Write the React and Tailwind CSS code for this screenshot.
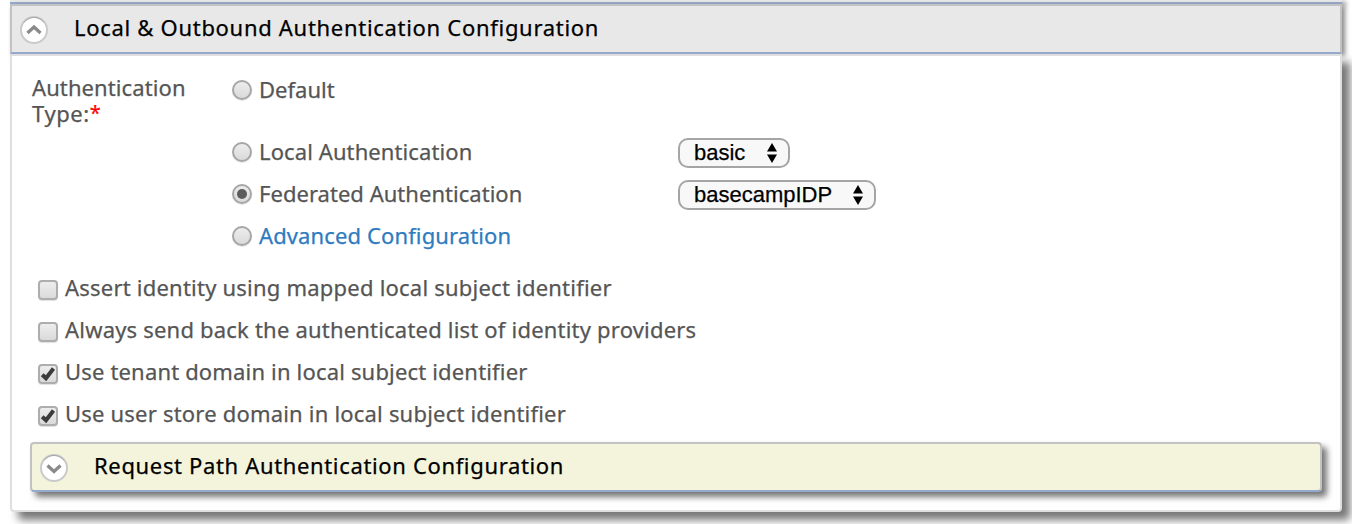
import React from "react";

function Chevron({ up }) {
  return (
    <svg className="block h-7 w-7 shrink-0" viewBox="0 0 28 28" fill="none">
      <circle cx="14" cy="14" r="13" fill="#fff" stroke="#cacaca" strokeWidth="2" />
      <path d="M3.8 6.5A12.7 12.7 0 0 1 24.2 6.5" stroke="#aaa" strokeWidth="1" />
      <path d={up ? "M7.5 17L14 11L20.5 17" : "M7.5 11.5L14 17.5L20.5 11.5"} stroke="#8a8a8a" strokeWidth="3.2" />
    </svg>
  );
}

function Radio({ checked }) {
  return (
    <span className="flex h-5 w-5 shrink-0 items-center justify-center rounded-full border-2 border-[#a6a6a6] bg-linear-to-b from-[#ededed] to-[#dadada] shadow-[0_1px_1px_#e4e4e4]">
      {checked && <span className="h-2.5 w-2.5 rounded-full bg-[#5c5c5c]" />}
    </span>
  );
}

function Check({ checked }) {
  return (
    <span className="h-5 w-5 shrink-0 rounded-[4px] border-2 border-[#adadad] bg-linear-to-b from-[#ededed] to-[#dadada] shadow-[0_1px_1px_#e0e0e0]">
      {checked && (
        <svg className="block h-4 w-4" viewBox="0 0 16 16" fill="none">
          <path d="M2.2 8.7L6 12.2L13.5 2.5" stroke="#3c3c3c" strokeWidth="4" />
        </svg>
      )}
    </span>
  );
}

function Select({ label, className }) {
  return (
    <div className={"mt-0.5 flex h-[30px] items-center justify-between rounded-[10px] border-2 border-[#a5a5a5] bg-[#f8f8f8] pl-3.5 pr-2.5 font-['Liberation_Sans',sans-serif] text-[22px] leading-[26px] text-black " + className}>
      <span>{label}</span>
      <svg className="h-5 w-3 shrink-0" viewBox="0 0 12 20" fill="#000">
        <path d="M1 8.5L6 0L11 8.5ZM1 11.5L6 20L11 11.5Z" />
      </svg>
    </div>
  );
}

function RadioRow({ label, checked, className, children }) {
  return (
    <div className="flex h-[42px] items-center">
      <Radio checked={checked} />
      <span className={"-mt-0.5 ml-[7px] w-[419px] whitespace-nowrap " + className}>{label}</span>
      {children}
    </div>
  );
}

function CheckRow({ label, checked, className }) {
  return (
    <div className="flex h-[42px] items-center">
      <Check checked={checked} />
      <span className={"-mt-[6px] ml-[7px] whitespace-nowrap " + className}>{label}</span>
    </div>
  );
}

export default function App() {
  return (
    <main className="h-[524px] w-[1352px] overflow-hidden bg-white pl-2.5 font-['Noto_Sans',sans-serif] text-[22px] leading-[26px] text-[#555] [-webkit-text-stroke:0.25px_currentColor]">
      <div className="flex w-[1332px] flex-col">
        <div className="h-1 border-b-2 border-[#94a9cd] bg-[#e8e8e8] shadow-[4px_2px_5px_#888]" />
        <header className="relative z-10 flex h-[50px] items-center border-2 border-t-[#c2c2c2] border-r-[#c2c2c2] border-b-[#94a9cd] border-l-[#c2c2c2] bg-[#e8e8e8] pl-2 shadow-[3px_2px_5px_#888]">
          <div className="mt-0.5"><Chevron up /></div>
          <h2 className="-mt-1 ml-[26px] whitespace-nowrap tracking-[0.7px] text-black">Local &amp; Outbound Authentication Configuration</h2>
        </header>
        <section className="relative z-20 h-[458px] rounded-b-[4px] border-2 border-[#dfdfdf] bg-white px-[18px] shadow-[8px_8px_8px_#777]">
          <div className="flex h-[202px] pt-[13px]">
            <div className="w-[202px] shrink-0 pl-0.5 pt-[5px]">
              <div className="tracking-[0.1px]">Authentication</div>
              <div className="flex"><span className="tracking-[0.6px]">Type:</span><span className="text-[20px] text-[#f00]">*</span></div>
            </div>
            <div>
              <div className="h-[62px]"><RadioRow label="Default" className="tracking-[0px]" /></div>
              <RadioRow label="Local Authentication" className="tracking-[0.1px]"><Select label="basic" className="w-28" /></RadioRow>
              <RadioRow label="Federated Authentication" checked className="tracking-[0.03px]"><Select label="basecampIDP" className="w-[198px]" /></RadioRow>
              <RadioRow label="Advanced Configuration" className="tracking-[0.12px] text-[#2e7bbf]" />
            </div>
          </div>
          <div className="h-[184px] pl-2 pt-[11px]">
            <CheckRow label="Assert identity using mapped local subject identifier" className="tracking-[0.22px]" />
            <CheckRow label="Always send back the authenticated list of identity providers" className="tracking-[0.2px]" />
            <CheckRow label="Use tenant domain in local subject identifier" checked className="tracking-[0.17px]" />
            <CheckRow label="Use user store domain in local subject identifier" checked className="tracking-[0.2px]" />
          </div>
          <div className="flex h-[50px] items-center rounded-[4px] border-2 border-t-[#c2c2c2] border-r-[#c2c2c2] border-b-[#94a9cd] border-l-[#c2c2c2] bg-[#f3f4db] pl-2 shadow-[5px_5px_6px_#777]">
            <div className="mt-0.5"><Chevron /></div>
            <h2 className="-mt-1 ml-[26px] whitespace-nowrap tracking-[0.65px] text-black">Request Path Authentication Configuration</h2>
          </div>
        </section>
      </div>
    </main>
  );
}
